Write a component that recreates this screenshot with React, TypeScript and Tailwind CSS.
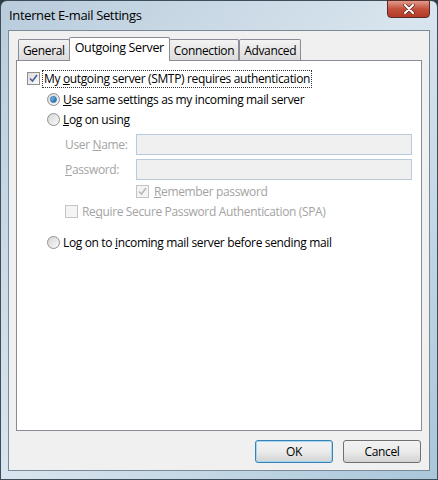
import React from 'react'

const font = { fontFamily: '"Open Sans", "Noto Sans", sans-serif', letterSpacing: '-0.35px' }

function CheckBox({ checked, disabled }: { checked?: boolean; disabled?: boolean }) {
  return (
    <span
      className={
        'relative inline-block w-[13px] h-[13px] shrink-0 border ' +
        (disabled ? 'border-[#c4c4c4] bg-[#f4f4f4]' : 'border-[#8f8f8f] bg-gradient-to-br from-[#dcdcdc] to-[#fbfbfb]')
      }
    >
      {checked && (
        <svg className="absolute left-[1px] top-[1px]" width="9" height="9" viewBox="0 0 9 9">
          <path
            d="M1 4.5 L3.5 7 L8 1"
            fill="none"
            stroke={disabled ? '#b8b8b8' : '#4a5f97'}
            strokeWidth="1.6"
          />
        </svg>
      )}
    </span>
  )
}

function Radio({ checked }: { checked?: boolean }) {
  return (
    <span className="relative inline-flex items-center justify-center w-[13px] h-[13px] shrink-0 rounded-full border border-[#8f8f8f] bg-gradient-to-br from-[#d6d6d6] to-[#fafafa]">
      {checked && (
        <span className="w-[7px] h-[7px] rounded-full bg-gradient-to-br from-[#7ad0f5] to-[#1a5fa8] border border-[#2a6db0]" />
      )}
    </span>
  )
}

function Tab({ label, selected }: { label: string; selected?: boolean }) {
  if (selected) {
    return (
      <div className="relative z-10 -mx-[1px] h-[24px] px-[5px] pt-[1px] bg-white border border-b-0 border-[#898c95] rounded-t-[2px] text-[12.5px] text-black">
        {label}
      </div>
    )
  }
  return (
    <div className="mt-[2px] h-[21px] px-[4px] pt-[2px] bg-gradient-to-b from-[#f3f3f3] to-[#dcdcdc] border border-b-0 border-[#898c95] rounded-t-[2px] text-[12px] text-black">
      {label}
    </div>
  )
}

function DialogButton({ label, focused }: { label: string; focused?: boolean }) {
  return (
    <div
      className={
        'w-[78px] h-[23px] flex items-center justify-center rounded-[3px] text-[12px] text-black bg-gradient-to-b from-[#f2f2f2] via-[#ebebeb] to-[#d3d3d3] ' +
        (focused ? 'border border-[#3c7fb1] shadow-[inset_0_0_0_1px_#9fd8f5]' : 'border border-[#707070]')
      }
    >
      {label}
    </div>
  )
}

export default function App() {
  return (
    <div style={font} className="w-[438px] h-[480px] bg-[#2f3a44] overflow-hidden">
      <div className="w-[438px] h-[480px] rounded-t-[7px] border border-[#3f4d5a] bg-gradient-to-br from-[#b9ccdc] via-[#d9e5ee] to-[#a9c6da] flex flex-col">
        {/* title bar */}
        <div className="h-[29px] flex items-start justify-between pl-[8px] pr-[7px]">
          <span className="mt-[5px] text-[13px] text-black">Internet E-mail Settings</span>
          <div className="w-[43px] h-[18px] -mt-[1px] rounded-b-[4px] border border-[#5a2a26] bg-gradient-to-b from-[#e09a8c] via-[#c4503c] to-[#b33b27] flex items-center justify-center">
            <svg width="12" height="10" viewBox="0 0 12 10">
              <path d="M2 1 L10 9 M10 1 L2 9" stroke="#5a2a26" strokeWidth="3.4" strokeLinecap="round" />
              <path d="M2 1 L10 9 M10 1 L2 9" stroke="#ffffff" strokeWidth="2" strokeLinecap="round" />
            </svg>
          </div>
        </div>

        {/* client area */}
        <div className="mx-[7px] h-[441px] border border-[#7a8a99] bg-[#f0f0f0] flex flex-col px-[7px] pt-[6px]">
          {/* tabs */}
          <div className="flex items-start pl-[2px] h-[24px]">
            <Tab label="General" />
            <Tab label="Outgoing Server" selected />
            <Tab label="Connection" />
            <Tab label="Advanced" />
          </div>

          {/* tab panel */}
          <div className="-mt-[1px] h-[371px] border border-[#898c95] bg-white text-[12px] text-black pl-[10px] pt-[9px]">
            <div className="flex items-center gap-[3px] h-[17px]">
              <CheckBox checked />
              <span className="outline outline-1 outline-dotted outline-[#333] px-[1px] leading-[16px]">
                My <u>o</u>utgoing server (SMTP) requires authentication
              </span>
            </div>

            <div className="pl-[20px] mt-[4px] flex flex-col gap-[3px]">
              <div className="flex items-center gap-[3px] h-[17px]">
                <Radio checked />
                <span>
                  <u>U</u>se same settings as my incoming mail server
                </span>
              </div>
              <div className="flex items-center gap-[3px] h-[17px]">
                <Radio />
                <span>
                  <u>L</u>og on using
                </span>
              </div>
            </div>

            <div className="pl-[38px] mt-[6px] flex flex-col text-[#a3a3a3]">
              <div className="flex items-center h-[21px]">
                <span className="w-[71px]">
                  User <u>N</u>ame:
                </span>
                <div className="w-[276px] h-[21px] border border-[#b8cbdc] bg-[#f0f0f0]" />
              </div>
              <div className="flex items-center h-[21px] mt-[4px]">
                <span className="w-[71px]">
                  <u>P</u>assword:
                </span>
                <div className="w-[276px] h-[21px] border border-[#b8cbdc] bg-[#f0f0f0]" />
              </div>
              <div className="flex items-center gap-[5px] h-[17px] mt-[3px] pl-[71px]">
                <CheckBox checked disabled />
                <span>
                  <u>R</u>emember password
                </span>
              </div>
              <div className="flex items-center gap-[4px] h-[17px] mt-[3px]">
                <CheckBox disabled />
                <span>
                  Re<u>q</u>uire Secure Password Authentication (SPA)
                </span>
              </div>
            </div>

            <div className="pl-[20px] mt-[14px] flex items-center gap-[3px] h-[17px]">
              <Radio />
              <span>
                Log on to <u>i</u>ncoming mail server before sending mail
              </span>
            </div>
          </div>

          {/* buttons */}
          <div className="flex justify-end gap-[10px] pr-[1px] mt-[9px]">
            <DialogButton label="OK" focused />
            <DialogButton label="Cancel" />
          </div>
        </div>
      </div>
    </div>
  )
}
